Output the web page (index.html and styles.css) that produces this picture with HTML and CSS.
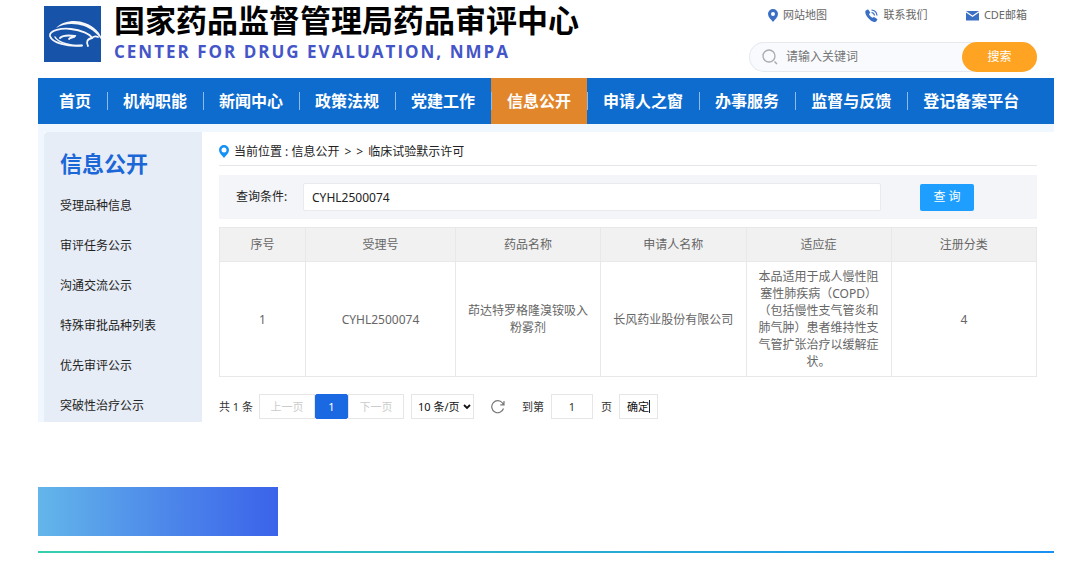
FILE: index.html
```html
<!DOCTYPE html>
<html lang="zh-CN">
<head>
<meta charset="utf-8">
<meta name="viewport" content="width=device-width, initial-scale=1">
<title>国家药品监督管理局药品审评中心</title>
<link rel="stylesheet" href="styles.css">
</head>
<body>
<div class="page">
  <header class="header">
    <div class="brand">
      <svg class="logo" viewBox="0 0 60 56" aria-hidden="true">
        <rect width="57" height="56" fill="#1753a9"/>
        <path fill="#f4f6fa" d="M12 22C18 15 32 13 41 17C50 20 57 27 59 36C54 28 48 23 40 20C31 17 20 17 12 22z"/>
        <g fill="none" stroke="#f4f6fa" stroke-linecap="round">
          <path d="M38 39.500C24 41 8 37 6 30C5 24 18 22 27 23C37 24 46 28 48 32" stroke-width="1.800"/>
          <path d="M38 39.500C28 40 14 37 11 31" stroke-width="1.500"/>
          <path d="M44 40C42 36 43 33 48 32C50 30 52 30 54 31" stroke-width="1.800"/>
          <path d="M16 32C19 29 24 29 31 30C30 32 26 31 25 33" stroke-width="1.800"/>
        </g>
      </svg>
      <div class="names">
        <h1 class="name-zh">国家药品监督管理局药品审评中心</h1>
        <p class="name-en">CENTER FOR DRUG EVALUATION, NMPA</p>
      </div>
    </div>
    <div class="tools">
      <nav class="quick" aria-label="快捷链接">
        <a href="#"><svg class="pin" viewBox="0 0 10 13" aria-hidden="true"><path fill="#3a6fc4" fill-rule="evenodd" d="M5 0a5 5 0 0 1 5 5c0 3-3 5.500-5 8C3 10.500 0 8 0 5a5 5 0 0 1 5-5zm0 3a2 2 0 1 0 0 4 2 2 0 0 0 0-4z"/></svg>网站地图</a>
        <a href="#"><svg class="glyph" viewBox="0 0 13 13" aria-hidden="true"><path fill="#3a6fc4" d="M.5 1.800 3 .3 5.300 3.600 4 5.200c.7 1.500 1.800 2.700 3.400 3.600L9 7.900l3.500 2.300-1.300 2.300c-1.200.8-3.400.3-5.400-1.100C2.500 9-.5 5 .5 1.800z"/><path fill="none" stroke="#3a6fc4" stroke-width="1.200" d="M6.500 3.500q2.600.3 3 3M6.500 1q5 .5 5.500 5.500"/></svg>联系我们</a>
        <a href="#"><svg class="glyph" viewBox="0 0 13 10" aria-hidden="true"><path fill="#3a6fc4" d="M0 .5h13L6.500 5zM0 2l6.500 4.500L13 2v8H0z"/></svg>CDE邮箱</a>
      </nav>
      <form class="search">
        <svg class="lens" viewBox="0 0 16 16" aria-hidden="true"><circle cx="7" cy="7" r="6" fill="none" stroke="#a8abb0" stroke-width="1.300"/><path d="m12.500 12.500 2.500 2.500" stroke="#a8abb0" stroke-width="1.500"/></svg>
        <input class="search-input" type="text" placeholder="请输入关键词" aria-label="请输入关键词">
        <button class="search-btn" type="button">搜索</button>
      </form>
    </div>
  </header>

  <nav class="mainnav" aria-label="主导航">
    <a href="#">首页</a>
    <a href="#">机构职能</a>
    <a href="#">新闻中心</a>
    <a href="#">政策法规</a>
    <a href="#">党建工作</a>
    <a href="#" class="active">信息公开</a>
    <a href="#">申请人之窗</a>
    <a href="#">办事服务</a>
    <a href="#">监督与反馈</a>
    <a href="#">登记备案平台</a>
  </nav>

  <div class="body">
    <aside class="sidebar">
      <h2>信息公开</h2>
      <a href="#">受理品种信息</a>
      <a href="#">审评任务公示</a>
      <a href="#">沟通交流公示</a>
      <a href="#">特殊审批品种列表</a>
      <a href="#">优先审评公示</a>
      <a href="#">突破性治疗公示</a>
    </aside>
    <main class="main">
      <div class="crumbs"><svg class="pin" viewBox="0 0 10 13" aria-hidden="true"><path fill="#1590f5" fill-rule="evenodd" d="M5 0a5 5 0 0 1 5 5c0 3-3 5.500-5 8C3 10.500 0 8 0 5a5 5 0 0 1 5-5zm0 2.500a2.500 2.500 0 1 0 0 5 2.500 2.500 0 0 0 0-5z"/></svg><span>当前位置 : 信息公开</span><span>&gt;</span><span>&gt;</span><span>临床试验默示许可</span></div>
      <form class="filter">
        <label for="q">查询条件:</label>
        <input id="q" type="text" value="CYHL2500074">
        <button type="button">查 询</button>
      </form>
      <table class="results">
        <colgroup><col class="c-first"><col class="c-code"><col><col><col><col></colgroup>
        <thead><tr><th>序号</th><th>受理号</th><th>药品名称</th><th>申请人名称</th><th>适应症</th><th>注册分类</th></tr></thead>
        <tbody><tr><td>1</td><td>CYHL2500074</td><td>茚达特罗格隆溴铵吸入粉雾剂</td><td>长风药业股份有限公司</td><td>本品适用于成人慢性阻塞性肺疾病（COPD）（包括慢性支气管炎和肺气肿）患者维持性支气管扩张治疗以缓解症状。</td><td>4</td></tr></tbody>
      </table>
      <div class="pager">
        <span>共 1 条</span>
        <div class="pages"><button type="button" disabled>上一页</button><button type="button" class="current">1</button><button type="button" disabled>下一页</button></div>
        <div class="size">
          <select aria-label="每页条数"><option>10 条/页</option></select>
          <svg viewBox="0 0 8 6" aria-hidden="true"><path d="m1 1 3 3 3-3" fill="none" stroke="#111" stroke-width="1.800"/></svg>
        </div>
        <button type="button" class="refresh" aria-label="刷新"><svg viewBox="0 0 14 14" aria-hidden="true"><path d="M12.500 8.500A6 6 0 1 1 11.500 3l1.300 1.500M13 1v3.800H9.300" fill="none" stroke="#777" stroke-width="1.200"/></svg></button>
        <label for="goto">到第</label>
        <input id="goto" type="text" value="1">
        <span class="unit">页</span>
        <button type="button" class="go">确定<i class="caret"></i></button>
      </div>
    </main>
  </div>

  <div class="banner"></div>
  <hr class="rule">
</div>
</body>
</html>
```
FILE: styles.css
```css
* { box-sizing: border-box; }

body {
  margin: 0;
  background: #fff;
  color: #222;
  font: 12px/18px "Noto Sans", "Noto Sans CJK SC", sans-serif;
}

button, input, select { font: inherit; color: inherit; margin: 0; }
a { color: inherit; text-decoration: none; }
h1, h2, p { margin: 0; }

.page { padding: 0 13px 0 38px; }

.header {
  display: flex;
  justify-content: space-between;
  height: 78px;
  padding: 0 17px 0 6px;
}
.brand { display: flex; gap: 10px; }
.logo { width: 60px; height: 56px; margin-top: 6px; }
.names { white-space: nowrap; }
.name-zh {
  color: #000;
  font-size: 31px;
  line-height: 40px;
  font-weight: 700;
}
.name-en {
  color: #4455c8;
  font-family: "Open Sans", "Noto Sans", sans-serif;
  font-size: 17px;
  line-height: 24px;
  font-weight: 700;
  letter-spacing: 2px;
}

.tools { width: 288px; }
.quick {
  display: flex;
  justify-content: space-between;
  height: 42px;
  padding: 6px 10px 0 19px;
  color: #666;
  font-size: 11px;
}
.quick a { display: flex; align-items: center; gap: 5px; height: 18px; }
.pin { width: 10px; height: 13px; }
.glyph { width: 13px; height: 13px; }
.search {
  display: flex;
  align-items: center;
  height: 30px;
  padding-left: 13px;
  background: #f8fafd;
  border-radius: 15px;
  box-shadow: inset 0 0 0 1px #e6e9ee;
}
.lens { width: 16px; height: 16px; }
.search-input {
  flex: 1;
  min-width: 0;
  padding: 0 8px;
  border: 0;
  background: none;
}
.search-input::placeholder { color: #757575; opacity: 1; }
.search-btn {
  width: 75px;
  height: 30px;
  border: 0;
  border-radius: 15px;
  background: #ffa422;
  color: #fff;
}

.mainnav {
  display: flex;
  height: 46px;
  padding-left: 5px;
  background: #0d6cce;
  color: #fff;
  font-size: 16px;
  font-weight: 700;
  white-space: nowrap;
}
.mainnav a { display: flex; align-items: center; padding: 0 16px; }
.mainnav a + a::before {
  content: "";
  width: 1px;
  height: 18px;
  margin: 0 15px 0 -16px;
  background: #8dbcec;
}
.mainnav .active { background: #e2862c; }

.body {
  display: flex;
  background: linear-gradient(#f0f7ff, #f0f7ff) no-repeat 0 0 / 100% 8px, #fff;
  padding-top: 8px;
  border-left: 6px solid #f0f7ff;
}
.sidebar {
  flex: none;
  width: 158px;
  padding: 9px 0 0 16px;
  background: #e7edf6;
  border-radius: 4px 0 0 0;
}
.sidebar h2 {
  color: #1b67d8;
  font-size: 22px;
  line-height: 44px;
}
.sidebar a { display: block; height: 40px; line-height: 41px; }
.sidebar a:last-child { height: 37px; }

.main { flex: 1; min-width: 0; padding: 6px 17px 0; }
.crumbs {
  display: flex;
  align-items: center;
  gap: 5px;
  height: 28px;
  border-bottom: 1px solid #e6e6ea;
}

.filter {
  display: flex;
  align-items: center;
  height: 44px;
  margin: 9px 0 8px;
  padding: 0 63px 0 17px;
  background: #f3f5f9;
}
.filter label { width: 67px; }
.filter input {
  flex: 1;
  min-width: 0;
  height: 28px;
  padding: 0 8px;
  border: 1px solid #e8eaee;
  border-radius: 2px;
  background: #fff;
}
.filter button {
  width: 54px;
  height: 27px;
  margin-left: 39px;
  padding: 0;
  border: 0;
  border-radius: 2px;
  background: #1e9fff;
  color: #fff;
}

.results {
  width: 100%;
  table-layout: fixed;
  border-collapse: collapse;
  color: #666;
  line-height: 17px;
  text-align: center;
}
.c-first { width: 86px; }
.c-code { width: 150px; }
.results th, .results td { border: 1px solid #e8e8e8; padding: 6px 11px; }
.results th { height: 34px; background: #f1f1f1; font-weight: 400; }

.pager {
  display: flex;
  align-items: center;
  height: 25px;
  margin-top: 17px;
  color: #333;
  font-size: 11px;
  white-space: nowrap;
}
.pager button, .pager input, .pager select {
  height: 25px;
  padding: 0;
  border: 1px solid #e6e6e6;
  background: #fff;
}
.pages { display: flex; margin: 0 7px 0 6px; }
.pager .pages button { width: 56px; color: #ccc; }
.pager .pages .current {
  width: 33px;
  border-color: #1a68e2;
  border-radius: 2px;
  background: #1a68e2;
  color: #fff;
}
.size { display: grid; align-items: center; }
.size select, .size svg { grid-area: 1 / 1; }
.size select {
  width: 63px;
  padding-left: 6px;
  appearance: none;
  color: #111;
}
.size svg {
  width: 8px;
  height: 6px;
  margin-right: 3px;
  justify-self: end;
  pointer-events: none;
}
.pager .refresh { width: 14px; height: 14px; margin: 0 17px; border: 0; }
.refresh svg { display: block; width: 14px; height: 14px; }
.pager input { width: 42px; margin: 0 8px 0 7px; text-align: center; }
.pager .go {
  display: flex;
  align-items: center;
  justify-content: center;
  width: 39px;
  margin-left: 7px;
  color: #111;
}
.caret { width: 1px; height: 13px; background: #222; }

.banner {
  width: 240px;
  height: 49px;
  margin-top: 65px;
  background: linear-gradient(90deg, #63b6ea, #4c86ea 55%, #3b63ea);
}
.rule {
  height: 2px;
  margin: 15px 0 0;
  border: 0;
  background: linear-gradient(90deg, #36cfae, #1a90f2);
}
```
